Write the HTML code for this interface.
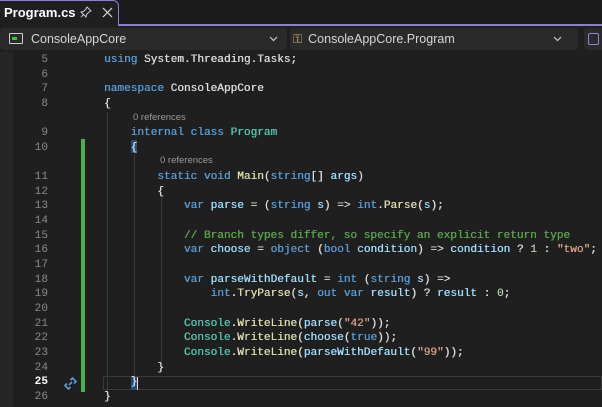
<!DOCTYPE html>
<html><head><style>
body{margin:0;width:602px;height:407px;overflow:hidden;background:#1f1f1f;font-family:"Liberation Sans",sans-serif;position:relative}
.abs{position:absolute}
.tabbar{left:0;top:0;width:602px;height:26px;background:#1b1b1b}
.tab{left:0;top:0;width:118px;height:25px;background:#1f1f1f;border:1px solid #8c7ee0;border-left:none;border-bottom:none;border-top-right-radius:6px}
.pline{left:118px;top:24px;width:484px;height:2px;background:#8c7ee0}
.nav{left:0;top:26px;width:602px;height:26px;background:#1f1f1f}
.dd{top:28px;height:22px;background:#2a2a2a;border-radius:4px;color:#d6d6d6;font-size:12.5px;line-height:22px}
.code{font-family:"Liberation Mono",monospace;font-size:11.1px;white-space:pre;color:#dcdcdc;text-shadow:0.35px 0 0 currentColor}
.ln{width:48px;text-align:right;color:#8a8a8a;font-family:"Liberation Mono",monospace;font-size:11.1px}
.k{color:#569cd6}.t{color:#4ec9b0}.m{color:#dcdcaa}.v{color:#9cdcfe}.c{color:#57a64a}.s{color:#d69d85}.n{color:#b5cea8}
.ref{font-size:9.5px;color:#9a9a9a;font-family:"Liberation Sans",sans-serif}
.g{width:1px;background:#3a3a3a}
</style></head><body>
<div class="abs tabbar"></div>
<div class="abs tab"></div>
<div class="abs pline"></div>
<div class="abs" style="left:4px;top:5px;color:#fff;font-weight:bold;font-size:13px">Program.cs</div>
<svg class="abs" style="left:80px;top:6px" width="12" height="12" viewBox="0 0 12 12"><path d="M7 1 L11 5 L9 6 L6.5 8.5 L6 11 L1 6 L3.5 5.5 L6 3 Z M3.5 8.5 L1 11" fill="none" stroke="#ccc" stroke-width="1"/></svg>
<svg class="abs" style="left:102px;top:7px" width="11" height="11" viewBox="0 0 11 11"><path d="M1 1 L10 10 M10 1 L1 10" stroke="#ddd" stroke-width="1.2"/></svg>
<div class="abs nav"></div>
<div class="abs dd" style="left:0;width:287px"><span style="display:inline-block;margin:0 8px 0 9px;width:12px;height:9px;border:1px solid #ccc;border-radius:1px;vertical-align:-1px;position:relative"><span style="position:absolute;left:2px;top:3px;width:5px;height:3px;background:#3ec23e"></span></span>ConsoleAppCore<svg class="abs" style="left:269px;top:8px" width="9" height="6" viewBox="0 0 9 6"><path d="M1 1 L4.5 4.5 L8 1" fill="none" stroke="#ccc" stroke-width="1.2"/></svg></div>
<div class="abs dd" style="left:290px;width:288px"><span style="margin:0 6px 0 3px;color:#d9b36a;font-size:12px">⚿</span>ConsoleAppCore.Program<svg class="abs" style="left:263px;top:8px" width="9" height="6" viewBox="0 0 9 6"><path d="M1 1 L4.5 4.5 L8 1" fill="none" stroke="#ccc" stroke-width="1.2"/></svg></div>
<div class="abs dd" style="left:584px;width:30px"><span style="margin-left:4px;display:inline-block;width:9px;height:10px;border:1.5px solid #9b7ee0;border-radius:2px;vertical-align:-2px"></span></div>
<div class="abs" style="left:0;top:52px;width:13px;height:355px;background:#262626"></div>
<div class="abs" style="left:81px;top:139px;width:4px;height:253px;background:#4ab04a"></div>
<div class="abs g" style="left:107px;top:112px;height:280px"></div>
<div class="abs g" style="left:134px;top:155px;height:222px"></div>
<div class="abs g" style="left:161px;top:198px;height:165px"></div>
<div class="abs" style="left:103px;top:376px;width:499px;height:14px;border:1px solid #3a3a3a;box-sizing:border-box"></div>
<div class="abs" style="left:131px;top:377px;width:6px;height:13px;background:#264f78"></div>
<div class="abs" style="left:137px;top:377px;width:1px;height:13px;background:#ddd"></div>
<div class="abs" style="left:131px;top:140px;width:6px;height:13px;background:#264f78"></div>
<svg class="abs" style="left:64px;top:377px" width="13" height="13" viewBox="0 0 13 13"><path d="M5 8 L8 5 M6.5 3 L8.5 1 L12 4.5 L10 6.5 M6.5 10 L4.5 12 L1 8.5 L3 6.5" fill="none" stroke="#5b9ee0" stroke-width="1.6"/></svg>

<div class="abs ref" style="left:133px;top:112px">0 references</div>
<div class="abs ref" style="left:160px;top:155px">0 references</div>

<div class="abs ln" style="left:0;top:53px;line-height:14.65px">5<br>6<br>7<br>8</div>
<div class="abs code" style="left:104px;top:53px;line-height:14.65px"><span class="k">using</span> System.Threading.Tasks;

<span class="k">namespace</span> ConsoleAppCore
{</div>
<div class="abs ln" style="left:0;top:126px;line-height:14.65px">9<br>10</div>
<div class="abs code" style="left:104px;top:126px;line-height:14.65px">    <span class="k">internal class</span> <span class="t">Program</span>
    {</div>
<div class="abs ln" style="left:0;top:170px;line-height:14.65px">11<br>12<br>13<br>14<br>15<br>16<br>17<br>18<br>19<br>20<br>21<br>22<br>23<br>24<br><b style="color:#fff">25</b><br>26</div>
<div class="abs code" style="left:104px;top:170px;line-height:14.65px">        <span class="k">static void</span> <span class="m">Main</span>(<span class="k">string</span>[] <span class="v">args</span>)
        {
            <span class="k">var</span> <span class="v">parse</span> = (<span class="k">string</span> <span class="v">s</span>) =&gt; <span class="k">int</span>.<span class="m">Parse</span>(<span class="v">s</span>);

            <span class="c">// Branch types differ, so specify an explicit return type</span>
            <span class="k">var</span> <span class="v">choose</span> = <span class="k">object</span> (<span class="k">bool</span> <span class="v">condition</span>) =&gt; <span class="v">condition</span> ? <span class="n">1</span> : <span class="s">"two"</span>;

            <span class="k">var</span> <span class="v">parseWithDefault</span> = <span class="k">int</span> (<span class="k">string</span> <span class="v">s</span>) =&gt;
                <span class="k">int</span>.<span class="m">TryParse</span>(<span class="v">s</span>, <span class="k">out var</span> <span class="v">result</span>) ? <span class="v">result</span> : <span class="n">0</span>;

            <span class="t">Console</span>.<span class="m">WriteLine</span>(<span class="v">parse</span>(<span class="s">"42"</span>));
            <span class="t">Console</span>.<span class="m">WriteLine</span>(<span class="v">choose</span>(<span class="k">true</span>));
            <span class="t">Console</span>.<span class="m">WriteLine</span>(<span class="v">parseWithDefault</span>(<span class="s">"99"</span>));
        }
    }
}</div>
</body></html>
